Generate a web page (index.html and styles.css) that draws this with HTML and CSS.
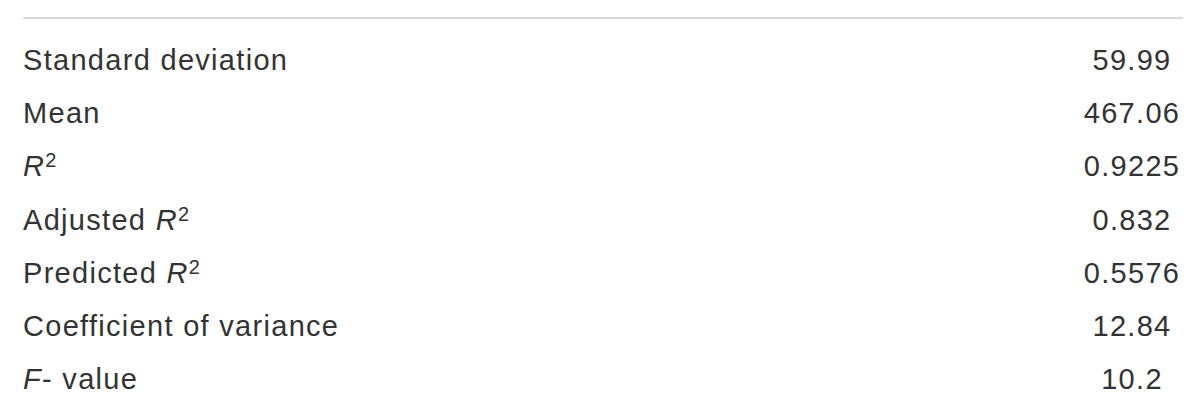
FILE: index.html
```html
<!DOCTYPE html>
<html lang="en">
<head>
    <meta charset="UTF-8">
    <meta name="viewport" content="width=device-width, initial-scale=1.0">
    <title>Model statistics</title>
    <link rel="stylesheet" href="styles.css">
</head>
<body>
    <table class="stats">
        <tbody>
            <tr><td class="label">Standard deviation</td><td class="value">59.99</td></tr>
            <tr><td class="label">Mean</td><td class="value">467.06</td></tr>
            <tr><td class="label"><i>R</i><sup>2</sup></td><td class="value">0.9225</td></tr>
            <tr><td class="label">Adjusted <i>R</i><sup>2</sup></td><td class="value">0.832</td></tr>
            <tr><td class="label">Predicted <i>R</i><sup>2</sup></td><td class="value">0.5576</td></tr>
            <tr><td class="label">Coefficient of variance</td><td class="value">12.84</td></tr>
            <tr><td class="label"><i>F</i>- value</td><td class="value">10.2</td></tr>
        </tbody>
    </table>
</body>
</html>
```

FILE: styles.css
```css
body {
    margin: 0;
    padding: 17px 17px 0 23px;
    background: #ffffff;
    font-family: "Liberation Sans", Arial, sans-serif;
    color: #333333;
}

.stats {
    width: 1160px;
    border-collapse: collapse;
    border-top: 2px solid #d9d9d9;
}

.stats tbody::before {
    content: "";
    display: block;
    height: 15px;
}

.stats td {
    padding: 0;
    height: 53.2px;
    font-size: 29px;
    line-height: 53.2px;
    letter-spacing: 1.3px;
    vertical-align: top;
}

.stats .value {
    width: 102px;
    text-align: center;
    white-space: nowrap;
}

.stats sup {
    font-size: 20px;
    line-height: 0;
    vertical-align: 9px;
    letter-spacing: 0;
}
```
